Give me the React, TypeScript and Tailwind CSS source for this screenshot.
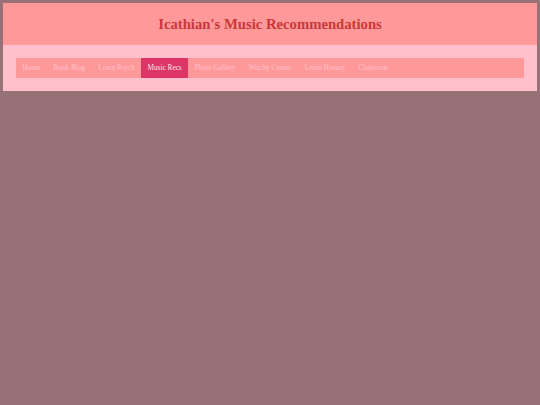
const links = [
  'Home',
  'Book Blog',
  'Learn Psych',
  'Music Recs',
  'Photo Gallery',
  'Witchy Corner',
  'Learn History',
  'Chatroom',
];

export default function App() {
  return (
    <div className="min-h-[405px] w-full bg-[#987177] p-[3px] font-['Liberation_Serif',serif]">
      <div className="w-full">
        <header className="flex h-[42px] items-center justify-center bg-[#ff9999]">
          <h1 className="text-[14.7px] font-bold text-[#c9383a]">Icathian's Music Recommendations</h1>
        </header>
        <div className="bg-[#ffc0cb] p-[13px]">
          <nav className="flex h-[20px] bg-[#ff9999]">
            {links.map((l) => (
              <a
                key={l}
                className={
                  l === 'Music Recs'
                    ? 'flex items-center bg-[#dc3566] px-[6.5px] text-[7.3px] text-[#ffe4ea]'
                    : 'flex items-center px-[6.5px] text-[7.3px] text-[#ffc0cb]'
                }
              >
                {l}
              </a>
            ))}
          </nav>
        </div>
      </div>
    </div>
  );
}
